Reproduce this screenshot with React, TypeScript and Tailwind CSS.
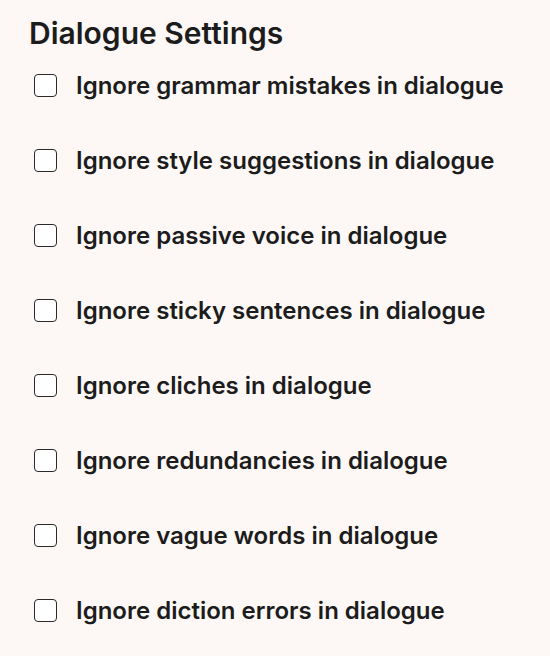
import React from "react";

const items = [
  "Ignore grammar mistakes in dialogue",
  "Ignore style suggestions in dialogue",
  "Ignore passive voice in dialogue",
  "Ignore sticky sentences in dialogue",
  "Ignore cliches in dialogue",
  "Ignore redundancies in dialogue",
  "Ignore vague words in dialogue",
  "Ignore diction errors in dialogue",
];

export default function App() {
  return (
    <div
      className="w-[550px] h-[656px] bg-[#fdf8f6] text-[#1c1c1c] pl-[29px] pt-[14px] overflow-hidden"
      style={{ fontFamily: "Inter, 'Noto Sans', sans-serif" }}
    >
      <h2 className="text-[30px] leading-[38px] font-semibold">Dialogue Settings</h2>
      <div className="flex flex-col -mt-[4px] pl-[5px]">
        {items.map((t) => (
          <label key={t} className="flex items-center h-[75px] gap-[19px] cursor-pointer">
            <span className="w-[23px] h-[23px] rounded-[4px] border-[1.5px] border-[#2a2a2a] bg-white shrink-0" />
            <span className="text-[24px] font-semibold leading-[30px]">{t}</span>
          </label>
        ))}
      </div>
    </div>
  );
}
